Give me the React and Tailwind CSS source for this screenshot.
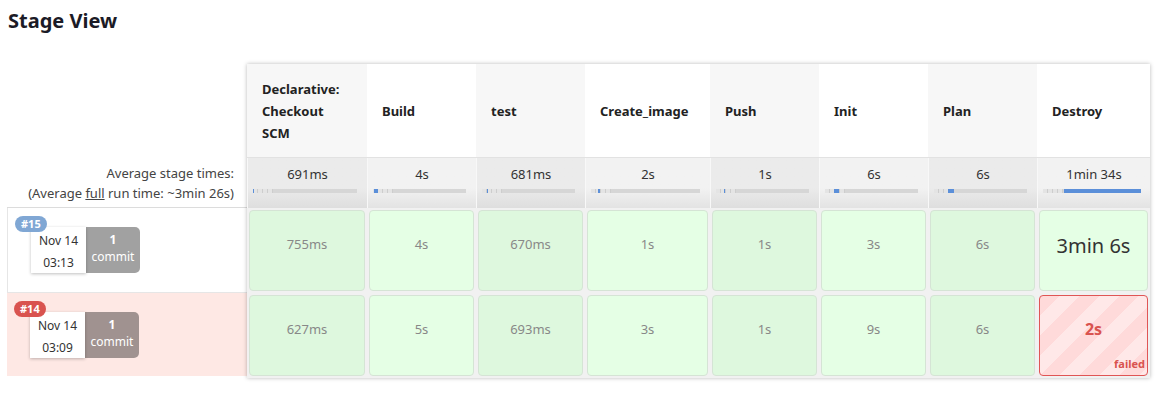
import React from 'react';

const stages = [
  { name: ['Declarative:', 'Checkout', 'SCM'], avg: '691ms', start: 0, len: 1, runs: ['755ms', '627ms'] },
  { name: ['Build'], avg: '4s', start: 1, len: 4, runs: ['4s', '5s'] },
  { name: ['test'], avg: '681ms', start: 5, len: 1, runs: ['670ms', '693ms'] },
  { name: ['Create_image'], avg: '2s', start: 7, len: 2, runs: ['1s', '3s'] },
  { name: ['Push'], avg: '1s', start: 8, len: 1, runs: ['1s', '1s'] },
  { name: ['Init'], avg: '6s', start: 9, len: 5, runs: ['3s', '9s'] },
  { name: ['Plan'], avg: '6s', start: 14, len: 6, runs: ['6s', '6s'] },
  { name: ['Destroy'], avg: '1min 34s', start: 21, len: 77, runs: ['3min 6s', '2s'] },
];

const builds = [
  { id: '#15', date: 'Nov 14', time: '03:13', failed: false },
  { id: '#14', date: 'Nov 14', time: '03:09', failed: true },
];

const cols = 'grid grid-cols-[120px_109px_109px_125px_109px_109px_109px_113px]';

const BuildInfo = ({ build }) => (
  <div className="relative pl-[23px] pt-[19px]">
    <span
      className={
        'absolute left-[7px] top-[8px] z-10 h-[16px] rounded-full px-[6px] text-[11px] font-bold leading-[16px] text-white ' +
        (build.failed ? 'bg-[#d9534f]' : 'bg-[#80a7d4]')
      }
    >
      {build.id}
    </span>
    <div className="flex">
      <div className="flex h-[46px] w-[55px] flex-col items-center bg-white pt-[3px] text-[12px] leading-[22px] text-[#333] shadow-[0_1px_3px_rgba(0,0,0,0.25)]">
        <span>{build.date}</span>
        <span>{build.time}</span>
      </div>
      <div className="flex h-[46px] w-[54px] flex-col items-center rounded-r-[5px] bg-black/[0.37] pt-[4px] text-[12px] leading-[17px] text-white">
        <span className="font-bold">1</span>
        <span>commit</span>
      </div>
    </div>
  </div>
);

const RunCell = ({ value, i, big, failed }) => {
  if (failed) {
    return (
      <div className="relative h-full rounded-[4px] border border-[#e05555] bg-[repeating-linear-gradient(135deg,#ffdada_0_14px,#ffe8e8_14px_28px)] pt-[24px] text-center text-[16px] font-bold leading-[18px] text-[#d9534f]">
        {value}
        <span className="absolute bottom-[5px] right-[2px] text-[11px] leading-[12px]">failed</span>
      </div>
    );
  }
  return (
    <div
      className={
        'h-full rounded-[4px] border border-[#d5e4d5] text-center ' +
        (i % 2 === 0 ? 'bg-[#def8de] ' : 'bg-[#e5ffe5] ') +
        (big ? 'pt-[22px] text-[20px] leading-[26px] text-[#333]' : 'pt-[24px] text-[13px] leading-[18px] text-[#888]')
      }
    >
      {value}
    </div>
  );
};

export default function App() {
  return (
    <div className="min-h-screen bg-white font-['Segoe_UI','Noto_Sans',sans-serif] text-[#333]">
      <h1 className="pl-[8px] pt-[7px] text-[20px] font-bold leading-[28px] text-[#1b1b26]">Stage View</h1>

      <div className="mt-[29px] flex pl-[7px]">
        {/* left column: averages and build labels */}
        <div className="w-[240px]">
          <div className="h-[93px]" />
          <div className="h-[51px] border-b border-[#dcdcdc] pr-[13px] pt-[6px] text-right text-[13px] leading-[20px] text-[#444]">
            <div>Average stage times:</div>
            <div>
              (Average <span className="underline">full</span> run time: ~3min 26s)
            </div>
          </div>
          <div className="h-[85px] border-b border-l border-[#e6e6e6] bg-white">
            <BuildInfo build={builds[0]} />
          </div>
          <div className="h-[83px] bg-[#fee8e4]">
            <BuildInfo build={builds[1]} />
          </div>
        </div>

        {/* stage grid */}
        <div className="shadow-[0_0_4px_rgba(0,0,0,0.28)]">
          <div className={cols + ' h-[93px]'}>
            {stages.map((s, i) => (
              <div
                key={i}
                className={
                  'flex items-center px-[15px] text-[13px] font-bold leading-[22px] text-[#222] ' +
                  (i % 2 === 0 ? 'bg-[#f7f7f7]' : 'bg-white')
                }
              >
                <div>
                  {s.name.map((n, j) => (
                    <div key={j}>{n}</div>
                  ))}
                </div>
              </div>
            ))}
          </div>

          <div className={cols + ' h-[51px] border-t border-[#e2e2e2]'}>
            {stages.map((s, i) => (
              <div
                key={i}
                className={
                  'border-l border-[#f8f8f8] pt-[7px] text-[13px] leading-[18px] text-[#333] ' +
                  (i % 2 === 0
                    ? 'bg-linear-to-b from-[#ebebeb] from-60% to-[#dedede]'
                    : 'bg-linear-to-b from-[#f2f2f2] from-60% to-[#e3e3e3]')
                }
              >
                <div className="text-center">{s.avg}</div>
                <div className="relative ml-[5px] mr-[10px] mt-[6px] h-[4px] bg-[#d6d6d6]">
                  <div className="h-full w-[20px] bg-[repeating-linear-gradient(90deg,#e4e4e4_0_4px,#cdcdcd_4px_5px)]" />
                  <div
                    className="absolute top-0 h-full bg-[#5b8fd9]"
                    style={{ left: s.start, width: s.len }}
                  />
                </div>
              </div>
            ))}
          </div>

          {[0, 1].map((r) => (
            <div key={r} className={cols + ' h-[85px] bg-[#f1f1f1]'}>
              {stages.map((s, i) => (
                <div key={i} className="p-[2px]">
                  <RunCell
                    value={s.runs[r]}
                    i={i}
                    big={r === 0 && i === 7}
                    failed={r === 1 && i === 7}
                  />
                </div>
              ))}
            </div>
          ))}
        </div>
      </div>
    </div>
  );
}
